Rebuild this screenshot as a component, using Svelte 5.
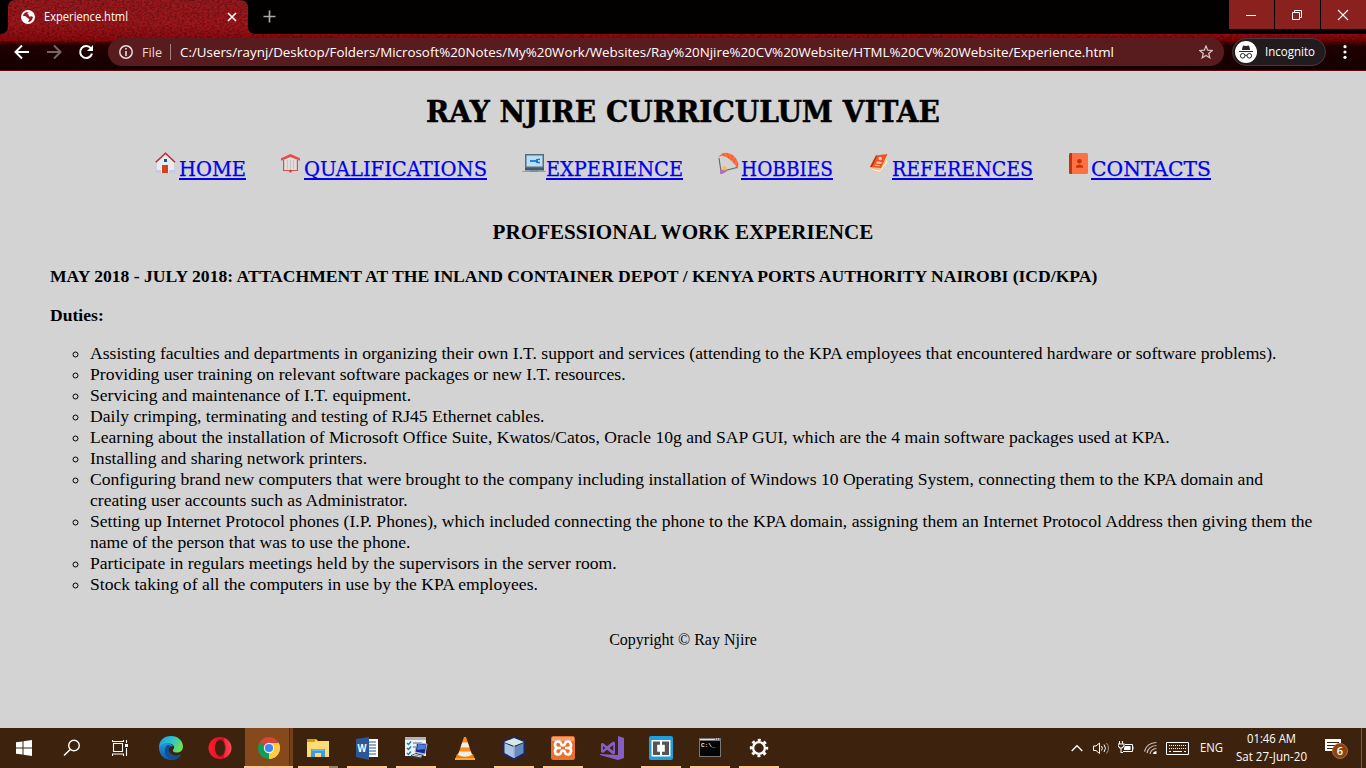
<script>
  const nav = [
    { id: 'home', label: 'HOME', w: 67 },
    { id: 'book', label: 'QUALIFICATIONS', w: 183 },
    { id: 'laptop', label: 'EXPERIENCE', w: 137 },
    { id: 'chute', label: 'HOBBIES', w: 92 },
    { id: 'ref', label: 'REFERENCES', w: 141 },
    { id: 'contact', label: 'CONTACTS', w: 120 }
  ];
  const duties = [
    'Assisting faculties and departments in organizing their own I.T. support and services (attending to the KPA employees that encountered hardware or software problems).',
    'Providing user training on relevant software packages or new I.T. resources.',
    'Servicing and maintenance of I.T. equipment.',
    'Daily crimping, terminating and testing of RJ45 Ethernet cables.',
    'Learning about the installation of Microsoft Office Suite, Kwatos/Catos, Oracle 10g and SAP GUI, which are the 4 main software packages used at KPA.',
    'Installing and sharing network printers.',
    'Configuring brand new computers that were brought to the company including installation of Windows 10 Operating System, connecting them to the KPA domain and creating user accounts such as Administrator.',
    'Setting up Internet Protocol phones (I.P. Phones), which included connecting the phone to the KPA domain, assigning them an Internet Protocol Address then giving them the name of the person that was to use the phone.',
    'Participate in regulars meetings held by the supervisors in the server room.',
    'Stock taking of all the computers in use by the KPA employees.'
  ];
  const apps = [
    { id: 'edge' }, { id: 'opera' }, { id: 'chrome', active: true }, { id: 'explorer', run: true, multi: true },
    { id: 'word', run: true }, { id: 'tasks', run: true }, { id: 'vlc' }, { id: 'cube', run: true },
    { id: 'xampp', run: true }, { id: 'vs' }, { id: 'brackets', run: true }, { id: 'cmd', run: true }, { id: 'gear', run: true }
  ];
</script>

{#snippet line(text, w, h, base, cls)}
  <svg class="line {cls}" width={w} height={h}><text x="0" y={base} textLength={w} lengthAdjust="spacingAndGlyphs">{text}</text></svg>
{/snippet}

{#snippet navIcon(id)}
  <svg class="navicon" width="24" height="24" viewBox="0 0 24 24">
    {#if id === 'home'}
      <path d="M2 10 10.500 2.500 19 10V21H2z" fill="#e8eaf6" /><path d="M1 18h5v3H1zM14 18h6v3h-6z" fill="#c5cae9" />
      <path d="M7 13h6v8H7z" fill="#d84315" /><path d="M9 7h3v3H9z" fill="#01579b" />
      <path d="M.7 10.300 10.500 1.300l9.500 9" fill="none" stroke="#c0292d" stroke-width="1.500" />
    {:else if id === 'book'}
      <path d="M3 8h15v11H3z" fill="#e04a4a" /><path d="M4.200 8 10.500 5 16.800 8v10H4.200z" fill="#e0dddd" />
      <path d="M10.500 8v10M7.500 8v9M13.500 8v9" stroke="#c3bfbf" stroke-width=".8" />
      <path d="M1 6.300 10.500 2 20 6.300v2.400L10.500 4.900 1 8.700z" fill="#ef4848" /><path d="M9.500 18h2v2.500h-2z" fill="#b93c3c" />
    {:else if id === 'laptop'}
      <path d="M3 2h19v14H3z" fill="#546e7a" /><path d="M4.500 3.500h16v11h-16z" fill="#bbdefb" />
      <path d="M8 9h7" stroke="#1976d2" stroke-width="1.800" /><path d="M18 6.700h-2.200a2.300 2.300 0 1 0 0 4.600H18V9.800h-2V8.100h2z" fill="#1976d2" />
      <path d="M3 16h19v2.500H3z" fill="#455a64" /><path d="M0 19h24.500v1H0z" fill="#90a4ae" /><path d="M8 18h8v2H8z" fill="#78909c" />
    {:else if id === 'chute'}
      <path d="M2 6 4 19.500 20 15.500" fill="none" stroke="#626468" stroke-width="1.100" />
      <path d="M1.500 5.500C4-1.500 13 0 17 4s5.500 9 3.500 13c-1-3-3-5-5-7S10.500 5.500 8 4.500 3 4 1.500 5.500" fill="#ff7043" />
      <path d="M6 1.500 8 4.500M10 1.500 12 6M15 3 15 8M18.500 6.500l-2 5M21 11l-2 4" stroke="#d9572f" stroke-width=".8" />
      <circle cx="7.500" cy="16.500" r="2.200" fill="#ffb74d" /><path d="m3.500 16 3 3.500-1 2.500H3zM5 18l5 1.500-5 2.500z" fill="#ba68c8" />
    {:else if id === 'ref'}
      <path d="M2 15 17 8l2 3-7 9.500L5 19.500z" fill="#e6c199" /><path d="m3 17 9 1.500L19 8v3l-7 9-8-2z" fill="#fff0d4" />
      <path d="M8 3.500 19.500 2l-6.500 14-11-1z" fill="#f4511e" /><path d="M2 15 8 3.500l1.200-.1L4 15.100z" fill="#bf360c" />
      <circle cx="12.200" cy="6.500" r="1.800" fill="#ffccbc" /><path d="m9 9.500 5 .5-1.200 2-5-.5zM7 12.800l5 .5-.5 1-5-.5z" fill="#ffccbc" />
    {:else}
      <rect x="2" y="1" width="19" height="21" rx="1.500" fill="#ff7043" /><path d="M5 1H3.500Q2 1 2 2.500v18Q2 22 3.500 22H5z" fill="#bf360c" />
      <circle cx="12.400" cy="9.200" r="2.300" fill="#bf360c" /><path d="M9 15.800V14q3.500-3 7 0v1.800z" fill="#bf360c" />
    {/if}
  </svg>
{/snippet}

{#snippet appIcon(id)}
  <svg width="26" height="26" viewBox="0 0 26 26">
    {#if id === 'edge'}
      <defs>
        <linearGradient id="eg" x1="0" y1="0" x2="1" y2=".35"><stop offset="0" stop-color="#1e9bd5" /><stop offset=".55" stop-color="#2bc3d2" /><stop offset="1" stop-color="#6be05a" /></linearGradient>
        <linearGradient id="eb" x1="0" y1="0" x2="0" y2="1"><stop offset="0" stop-color="#2496e2" /><stop offset="1" stop-color="#0c59a4" /></linearGradient>
      </defs>
      <path d="M1 13C1 5 6 1 13 1s12 5 12 10.500c0 4-3 6-6 6-3.500 0-4.500-1.500-4-2.500 3-3.500-.5-6.500-4-6.500C6.500 8.500 3 10 1 13" fill="url(#eg)" />
      <path d="M1 12.500C3 8.500 7 7.500 11 8.500c2 .5 3.500 1.600 4 3-4-1-7 2-4 6.500 2.500 3.500 7 4 12 1.500C21 23 17.500 25 13 25 6 25 1 20 1 12.500" fill="url(#eb)" />
      <path d="M9.500 10c-4 3-4 11 3.500 15 5 .3 8-2 10-5.500-5 2-9.500 1-11.500-2.500-1.300-2.400-.4-4.800 1.500-5.700-1-1-2.300-1.500-3.500-1.300" fill="#124e91" />
    {:else if id === 'opera'}
      <defs><linearGradient id="op" x1="0" x2="1"><stop offset="0" stop-color="#ff1b2d" /><stop offset=".65" stop-color="#e30b20" /><stop offset=".7" stop-color="#f52a3c" /><stop offset="1" stop-color="#ff4a58" /></linearGradient></defs>
      <path fill-rule="evenodd" d="M13 2a11.500 11 0 1 0 0 22 11.500 11 0 0 0 0-22m0 3c3 0 5 3.600 5 8s-2 8-5 8-5-3.600-5-8 2-8 5-8" fill="url(#op)" />
      <path d="M9 5.500q3-2.500 6.500-.5C20 8 20 18 15.500 21q-3.500 2-6.500-.5 2 1 4 .5c3 0 5-3.600 5-8s-2-8-5-8q-2-.5-4 .5" fill="#a70014" opacity=".55" />
    {:else if id === 'chrome'}
      <path d="M13 13 3.500 7.500A11 11 0 0 1 22.500 7.500z" fill="#db4437" /><path d="m13 13 9.500-5.500A11 11 0 0 1 13 24z" fill="#ffcd40" /><path d="M13 13v11A11 11 0 0 1 3.500 7.500z" fill="#0f9d58" />
      <path d="M13 8h9.700A11 11 0 0 1 13 24l4.300-8.500z" fill="#ffcd40" /><circle cx="13" cy="13" r="5.200" fill="#f1f1f1" /><circle cx="13" cy="13" r="4.100" fill="#4285f4" />
    {:else if id === 'explorer'}
      <path d="M2 4h9l2 2h11v16H2z" fill="#ffd767" /><path d="M2 4h9l-1.500 3H2z" fill="#d99b05" /><path d="M2 7h22v13H2z" fill="#ffdc72" />
      <path d="M6 22v-8h14v8h-4v-4h-6v4z" fill="#3d9bde" /><path d="M8 14h10l2 2H6z" fill="#62b7ed" />
    {:else if id === 'word'}
      <path d="M12 4h12v18H12z" fill="#fff" /><path d="M14 7h8M14 10h8M14 13h8M14 16h8M14 19h8" stroke="#2b579a" stroke-width="1.200" />
      <path d="M2 4 15 2v23L2 22z" fill="#2b5797" /><text x="3.500" y="17" font-family="Liberation Sans" font-size="10.500" font-weight="700" fill="#fff" textLength="9" lengthAdjust="spacingAndGlyphs">W</text>
    {:else if id === 'tasks'}
      <path d="M2 2h21v19H2z" fill="#edf1f5" /><path d="M2 2h21v3H2z" fill="#aeb5bd" /><path d="m4 8 1.500 1.500L8 6.500M4 13l1.500 1.500L8 11.500M4 18l1.500 1.500L8 16.500" fill="none" stroke="#1783a0" stroke-width="1.500" /><path d="M10 8h9M10 12h4" stroke="#566" />
      <path d="m14 8 10 1-2 10-10-2z" fill="#142c90" stroke="#aab4cc" /><path d="m15 9 8 1-1 4-8 1z" fill="#4d7dde" /><path d="m8 20 5-2 8 2-3 4-10-2z" fill="#333b42" /><path d="m9 20 9 2M11 19l8 2" stroke="#d5dce4" />
    {:else if id === 'vlc'}
      <path d="m5 19-2 5.500h20L21 19z" fill="#f57c00" /><path d="M12 2h2L20 20q-7 4-14 0z" fill="#ff8b13" /><path d="M10.200 7.500h5.600l1.700 5H8.500zM7.100 16.500h11.800L20 20q-7 3.500-14 0z" fill="#eee" /><path d="M3 23h20v2H3z" fill="#ffa726" />
    {:else if id === 'cube'}
      <path d="m13 1 11.500 5V19.500L13 25.500 1.500 19.500V6z" fill="#20265f" /><path d="m13 3 10 4-10 4L3 7z" fill="#d4eae3" /><path d="m3.500 8 9 4v11L3.500 18z" fill="#a9c6e4" /><path d="m22.500 8-9 4v11l9-5z" fill="#648ac0" /><path d="M13 11v12" stroke="#edf6ff" />
    {:else if id === 'xampp'}
      <rect x="1" y="1" width="24" height="24" rx="2.500" fill="#e9702a" /><path d="M2 3q0-1 1-1h20q1 0 1 1v3H2z" fill="#f3a071" />
      <path d="M11 13H8.500Q5 13 5 9.800T8 6.500q2.500 0 3 2t2 2 2-2 3-2 3 3.300-3.500 3.200H15m-4 0H8.500Q5 13 5 16.200t3 3.300q2.500 0 3-2t2-2 2 2 3 2 3-3.300-3.500-3.200" fill="none" stroke="#fff" stroke-width="2.700" />
    {:else if id === 'vs'}
      <path d="m19 1 6 2v20l-6 2L1 20v-1l18 1z" fill="#865fc5" /><path fill-rule="evenodd" d="M2 8.500 4 8l4 3.300 6-4.800 2 1v11l-2 1-6-4.800L4 18l-2-1zM4 11v4l2.200-2zM10.500 13l3.700 3v-6z" fill="#865fc5" />
    {:else if id === 'brackets'}
      <rect x="1" y="1" width="24" height="24" rx="2" fill="#1e9fdc" /><rect x="3.500" y="5" width="19" height="16.500" fill="#fff" /><path d="M5 6.500h7v3.300H9.200v7H12V20H5zM21 6.500h-7v3.300h2.800v7H14V20h7z" fill="#555" />
    {:else if id === 'cmd'}
      <path d="M2 3h22v19H2z" fill="#777" /><path d="M3 6h20v15H3z" fill="#050505" /><path d="M3 4h15v1H3z" fill="#ddd" /><path d="M19 4h1M21 4h1" stroke="#fff" /><text x="4" y="12" font-family="Liberation Mono" font-size="6" fill="#eee" font-weight="700">C:\_</text>
    {:else}
      <g fill="none" stroke="#fff"><circle cx="13" cy="13" r="5.900" stroke-width="2.400" /><circle cx="13" cy="13" r="8" stroke-width="2.400" stroke-dasharray="3.100 3.183" stroke-dashoffset="1.550" /></g>
    {/if}
  </svg>
{/snippet}

<div class="screen">
  <header>
    <svg class="texture" width="1366" height="71">
      <defs>
        <filter id="grain" x="0" y="0" width="100%" height="100%" color-interpolation-filters="sRGB"><feTurbulence type="fractalNoise" baseFrequency=".4 .55" numOctaves="3" seed="4" /><feColorMatrix values="0 0 0 0 0  0 0 0 0 0  0 0 0 0 0  1.800 0 0 0 -.6" /></filter>
        <linearGradient id="tabred" x1="0" y1="0" x2="0" y2="1"><stop offset="0" stop-color="#9c1a1e" /><stop offset=".6" stop-color="#a2171b" /><stop offset="1" stop-color="#8e080c" /></linearGradient>
        <linearGradient id="barred" x1="0" y1="0" x2="0" y2="1"><stop offset="0" stop-color="#9b0c12" /><stop offset=".16" stop-color="#800408" /><stop offset=".32" stop-color="#250102" /><stop offset="1" stop-color="#180001" /></linearGradient>
        <clipPath id="chromeclip"><path d="M0 34q8 0 8-8V8q0-8 8-8h224q8 0 8 8v18q0 8 8 8h1110v36H0z" /></clipPath>
      </defs>
      <path d="M0 0h1366v71H0z" fill="#030000" />
      <path d="M0 34h1366v36H0z" fill="url(#barred)" />
      <path d="M0 34q8 0 8-8V8q0-8 8-8h224q8 0 8 8v18q0 8 8 8v4q-90 5-256 3z" fill="url(#tabred)" />
      <g clip-path="url(#chromeclip)"><path d="M0 0h1366v70H0z" filter="url(#grain)" opacity=".42" /></g>
      <path d="M0 70h1366v1H0z" fill="#5b080d" />
    </svg>
    <div class="tabs">
      <div class="tab">
        <svg width="14" height="14" viewBox="0 0 14 14"><circle cx="7" cy="7" r="7" fill="#fff" /><path d="M8 2.200c-2 0-2 1.500-1 2 1.500.5 0 2 2 2.300 1 .2 1.200-1 3 .5-.5 3-2.500 5-5 5 .5-1.500 1.700-2 1-3-1-1.500-2.500-1-3-2.500-1-1-2-.5-3-.5.3-2.500 2.500-4.500 6-3.800" fill="#98171b" /></svg>
        {@render line('Experience.html', 84, 18, 13, 'tabtitle')}
        <svg class="close" width="10" height="10"><path d="m1 1 8 8M9 1 1 9" stroke="#fff" stroke-width="1.600" /></svg>
      </div>
      <svg class="plus" width="13" height="13"><path d="M6.500 .5v12M.5 6.500h12" stroke="#aaa" stroke-width="1.700" /></svg>
      <div class="wins">
        <span><svg width="12" height="12"><path d="M1 6.500h10" stroke="#fff" /></svg></span>
        <span><svg width="12" height="12"><path d="M1.500 3.500h7v7h-7zM3.500 3.500v-2h7v7h-2" fill="none" stroke="#fff" /></svg></span>
        <span><svg width="12" height="12"><path d="m1 1 10 10M11 1 1 11" stroke="#fff" stroke-width="1.100" /></svg></span>
      </div>
    </div>
    <div class="toolbar">
      <svg width="16" height="16"><path d="M15 8H2M8 1.500 1.500 8 8 14.500" fill="none" stroke="#fff" stroke-width="2" /></svg>
      <svg width="16" height="16"><path d="M1 8h13M8 1.500 14.500 8 8 14.500" fill="none" stroke="#756767" stroke-width="2" /></svg>
      <svg width="16" height="16"><path d="M13 4.500A6 6 0 1 0 14 9.500" fill="none" stroke="#fff" stroke-width="2" /><path d="M15 1v6H9z" fill="#fff" /></svg>
      <div class="omni">
        <svg width="14" height="14"><circle cx="7" cy="7" r="6.200" fill="none" stroke="#e8dcdc" stroke-width="1.500" /><path d="M7 6v5M7 3v1.600" stroke="#e8dcdc" stroke-width="1.600" /></svg>
        {@render line('File', 20, 20, 15, 'file')}
        <i></i>
        {@render line('C:/Users/raynj/Desktop/Folders/Microsoft%20Notes/My%20Work/Websites/Ray%20Njire%20CV%20Website/HTML%20CV%20Website/Experience.html', 934, 20, 15, 'url')}
        <svg class="star" width="14" height="14" viewBox="0 0 14 14"><path d="m7 1 1.700 4.200 4.500.3-3.500 2.900 1.100 4.400L7 10.400l-3.800 2.400 1.100-4.400L.8 5.500l4.500-.3z" fill="none" stroke="#d2c0c1" stroke-width="1.300" /></svg>
      </div>
      <div class="incog">
        <svg width="22" height="22" viewBox="0 0 22 22"><circle cx="11" cy="11" r="11" fill="#fff" /><path d="m6.800 9 1.200-4.500 3 .6 3-.6L15.200 9zM4 10h14v1H4z" fill="#292426" /><circle cx="7.700" cy="14.800" r="2.300" fill="none" stroke="#292426" /><circle cx="14.300" cy="14.800" r="2.300" fill="none" stroke="#292426" /><path d="M10 14.300h2" stroke="#292426" /></svg>
        {@render line('Incognito', 50, 20, 14, 'inctext')}
      </div>
      <svg class="dots" width="4" height="16"><circle cx="2" cy="2.700" r="1.600" fill="#fff" /><circle cx="2" cy="8" r="1.600" fill="#fff" /><circle cx="2" cy="13.300" r="1.600" fill="#fff" /></svg>
    </div>
  </header>

  <main>
    <h1>{@render line('RAY NJIRE CURRICULUM VITAE', 514, 40, 31, 'title')}</h1>
    <nav>
      {#each nav as n}
        <a href="#{n.id}">{@render navIcon(n.id)}<span>{@render line(n.label, n.w, 30, 24, 'navtext')}</span></a>
      {/each}
    </nav>
    <h2>PROFESSIONAL WORK EXPERIENCE</h2>
    <h3>MAY 2018 - JULY 2018: ATTACHMENT AT THE INLAND CONTAINER DEPOT / KENYA PORTS AUTHORITY NAIROBI (ICD/KPA)</h3>
    <h3 class="duties">Duties:</h3>
    <ul>{#each duties as d}<li>{d}</li>{/each}</ul>
    <p>Copyright © Ray Njire</p>
  </main>

  <footer>
    <div class="sys"><svg width="16" height="16"><path d="M0 2.300 6.500 1.400v6.100H0zM7.500 1.200 16 0v7.500H7.500zM0 8.500h6.500v6.100L0 13.700zM7.500 8.500H16V16l-8.500-1.200z" fill="#fff" /></svg></div>
    <div class="sys"><svg width="18" height="18"><circle cx="11" cy="6.500" r="5.300" fill="none" stroke="#fff" stroke-width="1.400" /><path d="M7.200 10.500 1 16.500" stroke="#fff" stroke-width="1.500" /></svg></div>
    <div class="sys"><svg width="17" height="16"><path d="M1.500 3.500h9v8h-9zM.5 0v1.500h11V0M.5 16v-2h11v2M14.500 0v3M14.500 8v8" fill="none" stroke="#fff" stroke-width="1.100" /><path d="M13 4h3v3h-3z" fill="#fff" /></svg></div>
    <div class="apps">
      {#each apps as a}
        <div class="app" class:active={a.active} class:run={a.run} class:multi={a.multi}>{@render appIcon(a.id)}</div>
      {/each}
    </div>
    <div class="tray">
      <svg width="12" height="8"><path d="m.7 7 5.300-5.300L11.300 7" fill="none" stroke="#fff" stroke-width="1.300" /></svg>
      <svg class="vol" width="17" height="14"><path d="M.5 5v4.500H3l3.500 3V2L3 5z" fill="none" stroke="#fff" /><path d="M8.500 5q1.600 2.200 0 4.500M11 3.500q3 3.700 0 7.500" fill="none" stroke="#fff" /><path d="M13.500 2q4 5 0 10.500" fill="none" stroke="#a69589" /></svg>
      <svg class="bat" width="16" height="14"><path d="M1.500 0v3M4.500 0v3M0 3h6v2l-2 2H2L0 5zM3 7v4.500h2" fill="none" stroke="#fff" stroke-width="1.100" /><path d="M7 3.500h7.500v7H5" fill="none" stroke="#fff" /><path d="M7 5h5.500v4H6V7zM14.500 5.500h1v3h-1z" fill="#fff" /></svg>
      <svg class="wifi" width="14" height="14"><path d="M.5 10.500Q2.500 2 12.500 1.500M3 12Q4.500 5 12.500 4.500M6 13Q7 8 12.500 7.500" fill="none" stroke="#c9bdb5" stroke-width="1.200" /><path d="M9 13q0-2.500 3.500-3v3z" fill="#fff" /></svg>
      <svg class="kb" width="23" height="13"><path d="M.5.5h22v12H.5z" fill="none" stroke="#fff" /><path d="M3 3.500h18M3 6.500h18" stroke="#fff" stroke-dasharray="1 1" /><path d="M3 9.500h2M7 9.500h9M18 9.500h2" stroke="#fff" /></svg>
      {@render line('ENG', 23, 20, 14, 'eng')}
      <div class="clock">{@render line('01:46 AM', 49, 18, 13, '')}{@render line('Sat 27-Jun-20', 71, 18, 13, '')}</div>
      <div class="notes"><svg width="17" height="16"><path d="M0 0h16v12h-3v4l-4-4H0z" fill="#fff" /><path d="M2 3.500h12M2 6.500h12M2 9.500h8" stroke="#3d220e" /></svg><b>6</b></div>
      <i class="peek"></i>
    </div>
  </footer>
</div>

<style>
  :global(body) { margin: 0; overflow: hidden; }
  .screen { width: 1366px; height: 768px; display: flex; flex-direction: column; background: #d3d3d3; font-family: 'Open Sans', sans-serif; overflow: hidden; }
  svg { display: block; flex: none; }
  .line { overflow: visible; fill: currentColor; }
  header { height: 71px; position: relative; color: #fff; flex: none; }
  .texture { position: absolute; inset: 0; }
  .tabs { position: relative; height: 34px; display: flex; align-items: flex-start; }
  .tab { display: flex; align-items: center; width: 227px; height: 34px; padding-left: 21px; }
  .tabtitle { margin-left: 9px; font-size: 12px; }
  .close { margin-left: 99px; }
  .plus { margin: 10px 0 0 15px; }
  .wins { display: flex; gap: 1px; margin-left: auto; }
  .wins span { width: 44px; height: 29px; padding-right: 1px; background: #8b211e; display: flex; align-items: center; justify-content: center; }
  .toolbar { position: relative; height: 36px; display: flex; align-items: center; padding-left: 14px; gap: 16px; }
  .omni { height: 28px; width: 1116px; margin-left: -2px; border-radius: 14px; background: #591c1e; display: flex; align-items: center; padding: 0 11px; box-sizing: border-box; }
  .file { margin-left: 9px; font-size: 13px; color: #eadada; }
  .omni i { width: 1px; height: 16px; background: #a18182; margin: 0 9px 0 8px; }
  .url { font-size: 13.5px; }
  .star { margin-left: auto; }
  .incog { width: 94px; height: 28px; margin: 0 0 0 -8px; box-sizing: border-box; border: 1px solid #4b3a3d; border-radius: 14px; background: #211b1e; display: flex; align-items: center; padding-left: 2px; gap: 8px; }
  .inctext { font-size: 12.500px; }
  .dots { margin-left: 1px; }
  main { height: 657px; flex: none; box-sizing: border-box; padding: 20px 50px 0; font-family: 'Liberation Serif', serif; color: #000; font-size: 17.6px; line-height: 21px; }
  h1 { margin: 0; height: 40px; display: flex; justify-content: center; }
  .title { font: 700 30px 'DejaVu Serif', serif; stroke: #000; stroke-width: .5px; }
  nav { display: flex; justify-content: center; gap: 34.6px; height: 30px; margin-top: 21px; }
  nav a { display: flex; color: #00e; text-decoration: none; }
  nav span { border-bottom: 2px solid #00e; height: 26px; }
  .navtext { font: 20.500px 'DejaVu Serif', serif; stroke: #00e; stroke-width: .25px; }
  h2 { margin: 38px 0 0; text-align: center; font-size: 21.12px; line-height: 24px; }
  h3 { margin: 22px 0 0; font-size: 17.6px; line-height: 21px; white-space: nowrap; }
  .duties { margin-top: 18px; }
  ul { margin: 17px 0 0; padding-left: 40px; list-style: circle; }
  p { margin: 35px 0 0; text-align: center; font-size: 16px; line-height: 20px; }
  footer { height: 40px; flex: none; display: flex; background: #3d220e; color: #fff; }
  .sys { width: 48px; display: flex; align-items: center; justify-content: center; }
  .apps { display: flex; margin-left: 2px; }
  .app { width: 49px; height: 40px; box-sizing: border-box; display: flex; align-items: center; justify-content: center; border-bottom: 2px solid transparent; padding-top: 2px; }
  .app.run { background: linear-gradient(#fbc79b, #fbc79b) 5px 38px / 40px 2px no-repeat border-box; }
  .app.multi { background: linear-gradient(90deg, #fbc79b 31px, #a58166 31px) 5px 38px / 40px 2px no-repeat border-box; }
  .app.active { background: linear-gradient(90deg, transparent 1px, #86491b 1px, #86491b 45px, #51300f 45px, #51300f 46px, #70401a 46px) border-box; border-bottom-color: #fbc79b; }
  .tray { margin-left: auto; display: flex; align-items: center; }
  .vol { margin-left: 10px; }
  .bat { margin-left: 8px; }
  .wifi { margin-left: 10px; }
  .kb { margin-left: 8px; }
  .eng { margin-left: 11px; font-size: 12px; }
  .clock { width: 72px; margin-left: 12px; display: flex; flex-direction: column; align-items: center; font-size: 12px; }
  .notes { position: relative; width: 24px; height: 24px; margin-left: 18px; padding-top: 5px; }
  .notes b { position: absolute; left: 7px; top: 9px; width: 16px; height: 16px; border-radius: 50%; background: #884411; border: 1px solid #a96b3d; box-sizing: border-box; font: 600 11px/14px 'Open Sans', sans-serif; text-align: center; }
  .peek { width: 1px; height: 40px; background: #755f4f; margin: 0 4px 0 12px; }
</style>
